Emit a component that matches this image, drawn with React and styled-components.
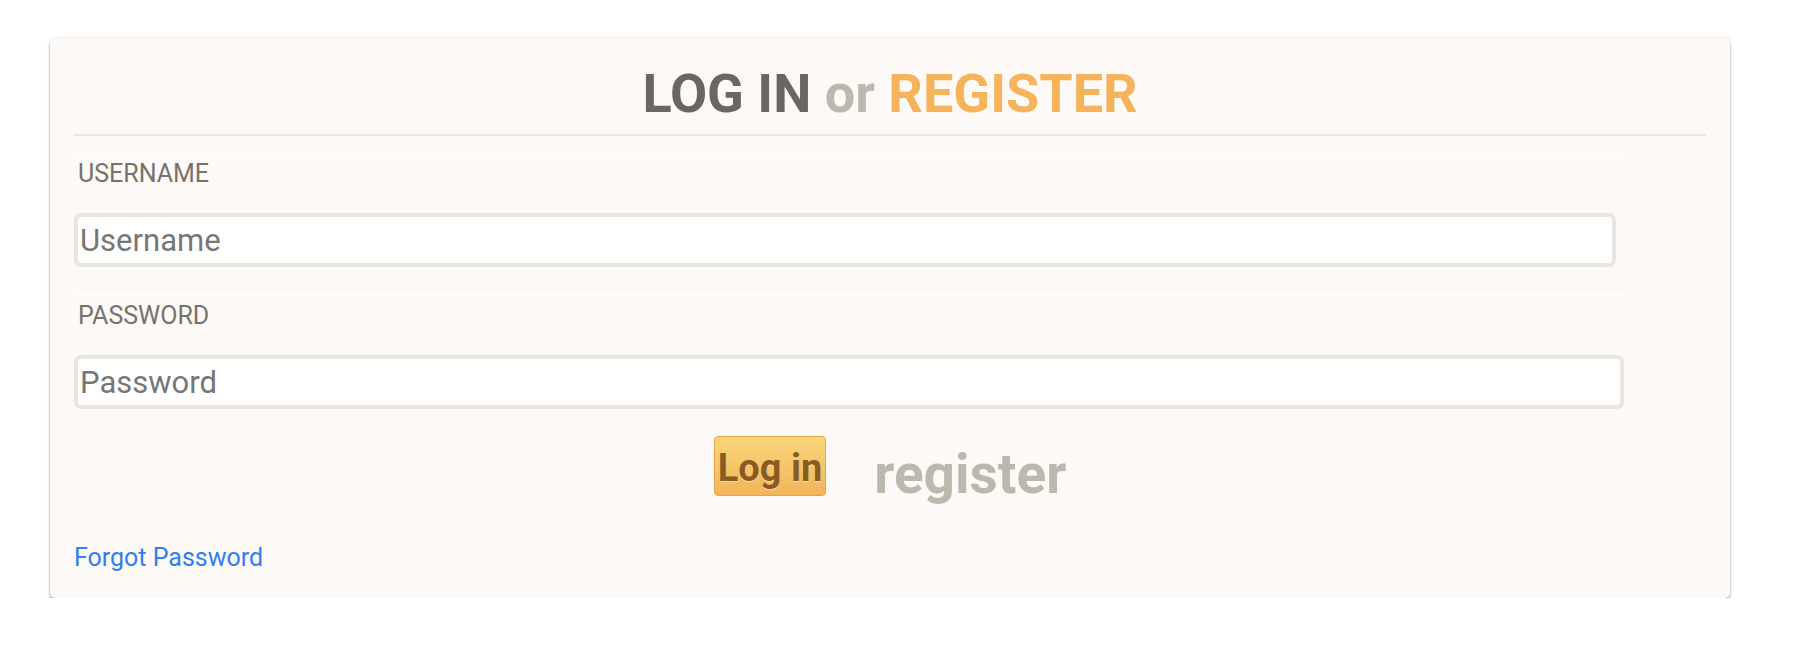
import React from 'react';
import styled, { createGlobalStyle } from 'styled-components';

const GlobalStyle = createGlobalStyle`
  body {
    margin: 0;
    background: #fff;
    font-family: Roboto, "Liberation Sans", Arial, sans-serif;
  }
`;

const Page = styled.div`
  padding: 38px 0 0 50px;
`;

const Card = styled.div`
  width: 1680px;
  box-sizing: border-box;
  padding: 24px 24px 25px 24px;
  background: #fdf9f6;
  border-radius: 5px;
  box-shadow: 0 2px 3px rgba(0, 0, 0, 0.35), 0 0 3px rgba(0, 0, 0, 0.1);
`;

const Title = styled.h1`
  margin: 0;
  font-size: 54px;
  line-height: 64px;
  font-weight: 700;
  text-align: center;
  color: #6b6662;
  padding-bottom: 8px;
  border-bottom: 2px solid #e9e5e1;
`;

const Word = styled.span`
  color: ${({ $tone }) => ($tone === 'accent' ? '#f5b45c' : '#bdb7ad')};
`;

const Form = styled.form`
  width: 1550px;
  margin-top: 17px;
`;

const Group = styled.div`
  border-top: 1px solid #fff;
  padding-top: 5px;
  margin-bottom: 28px;
`;

const Label = styled.label`
  display: block;
  padding-left: 4px;
  font-size: 25px;
  line-height: 30px;
  color: #77726d;
  margin-bottom: 24px;
`;

const Input = styled.input`
  display: block;
  box-sizing: border-box;
  width: ${({ $narrow }) => ($narrow ? 'calc(100% - 8px)' : '100%')};
  height: 54px;
  margin: 0;
  padding: 0 2px;
  border: 4px solid #e9e5e1;
  border-radius: 7px;
  background: #fff;
  font-family: Roboto, "Liberation Sans", Arial, sans-serif;
  font-size: 31px;
  color: #555;
  outline: none;
  &::placeholder {
    color: #767676;
  }
`;

const Actions = styled.div`
  display: flex;
  justify-content: center;
  align-items: flex-start;
  gap: 48px;
  margin-top: -1px;
  width: 1632px;
`;

const LoginButton = styled.button`
  height: 60px;
  box-sizing: border-box;
  padding: 8px 3px 5px;
  border: 1px solid #e8a44a;
  border-radius: 4px;
  background: linear-gradient(#f9d679, #f3b45b);
  font-family: Roboto, "Liberation Sans", Arial, sans-serif;
  font-size: 38px;
  line-height: 44px;
  font-weight: 700;
  color: #8b5a22;
  text-shadow: 0 1px 0 rgba(255, 236, 180, 0.8);
  cursor: pointer;
`;

const RegisterLink = styled.a`
  margin-top: 8px;
  font-size: 55px;
  line-height: 60px;
  font-weight: 700;
  color: #bdb7ad;
  text-decoration: none;
  cursor: pointer;
`;

const Forgot = styled.a`
  display: inline-block;
  margin-top: 39px;
  font-size: 25px;
  line-height: 30px;
  color: #2f7ff0;
  text-decoration: none;
`;

export default function App() {
  return (
    <Page>
      <GlobalStyle />
      <Card>
        <Title>
          LOG IN <Word>or</Word> <Word $tone="accent">REGISTER</Word>
        </Title>
        <Form onSubmit={(e) => e.preventDefault()}>
          <Group>
            <Label htmlFor="username">USERNAME</Label>
            <Input id="username" $narrow placeholder="Username" />
          </Group>
          <Group>
            <Label htmlFor="password">PASSWORD</Label>
            <Input id="password" type="password" placeholder="Password" />
          </Group>
        </Form>
        <Actions>
          <LoginButton type="button">Log in</LoginButton>
          <RegisterLink>register</RegisterLink>
        </Actions>
        <Forgot href="#">Forgot Password</Forgot>
      </Card>
    </Page>
  );
}
